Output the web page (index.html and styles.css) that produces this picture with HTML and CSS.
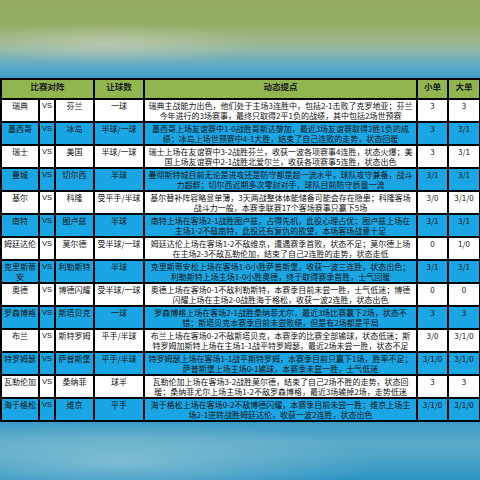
FILE: index.html
```html
<!DOCTYPE html>
<html lang="zh">
<head>
<meta charset="utf-8">
<link rel="stylesheet" href="styles.css">
</head>
<body>
<div class="page">
  <div class="sky"></div>
  <table class="grid">
    <colgroup>
      <col class="c-team"><col class="c-vs"><col class="c-team2"><col class="c-hc"><col class="c-desc"><col class="c-num"><col class="c-num2">
    </colgroup>
    <thead>
      <tr class="head">
        <th colspan="3">比赛对阵</th><th>让球数</th><th>动态提点</th><th>小单</th><th>大单</th>
      </tr>
    </thead>
    <tbody>
      <tr class="w"><td>瑞典</td><td class="vs">VS</td><td>芬兰</td><td>一球</td><td class="desc">瑞典主战能力出色，他们处于主场3连胜中，包括2-1击败了克罗地亚；芬兰<br>今年进行的3场赛事，最终只取得2平1负的战绩，其中包括2场世预赛</td><td>3</td><td>3</td></tr>
      <tr class="b"><td>墨西哥</td><td class="vs">VS</td><td>冰岛</td><td>半球/一球</td><td class="desc">墨西哥上场友谊赛中1-0战胜哥斯达黎加，最近3场友谊赛取得2胜1负的成<br>绩；冰岛上场世预赛中4-1大胜，结束了自己连败的走势，状态回暖</td><td>3</td><td>3/1</td></tr>
      <tr class="w"><td>瑞士</td><td class="vs">VS</td><td>美国</td><td>半球/一球</td><td class="desc">瑞士上场在友谊赛中3-2战胜芬兰，收获一波各项赛事4连胜，状态火爆；美<br>国上场友谊赛中2-1战胜北爱尔兰，收获各项赛事5连胜，状态出色</td><td>3</td><td>3/1</td></tr>
      <tr class="b"><td>曼城</td><td class="vs">VS</td><td>切尔西</td><td>半球</td><td class="desc">曼彻斯特城目前无论是进攻还是防守都是超一流水平，球队攻守兼备，战斗<br>力超群；切尔西近期多次零封对手，球队目前防守质量一流</td><td>3/1</td><td>3/1</td></tr>
      <tr class="w"><td>基尔</td><td class="vs">VS</td><td>科隆</td><td>受平手/半球</td><td class="desc">基尔替补阵容略显单薄，3天两战整体体能储备可能会存在隐患；科隆客场<br>战斗力一般，本赛季联赛17个客场赛事只赢下5场</td><td>3/0</td><td>3/1/0</td></tr>
      <tr class="b"><td>南特</td><td class="vs">VS</td><td>图卢兹</td><td>半球</td><td class="desc">南特上场在客场2-1战胜图卢兹，占得先机，此役心理占优；图卢兹上场在<br>主场1-2不敌南特，此役还有复仇的欲望，本场客场战意十足</td><td>3/1</td><td>3/1</td></tr>
      <tr class="w"><td>姆廷达伦</td><td class="vs">VS</td><td>莫尔德</td><td>受半球/一球</td><td class="desc">姆廷达伦上场在客场1-2不敌维京，遭遇赛季首败，状态不足；莫尔德上场<br>在主场2-3不敌瓦勒伦加，结束了自己2连胜的走势，状态走低</td><td>0</td><td>1/0</td></tr>
      <tr class="b"><td>克里斯蒂安</td><td class="vs">VS</td><td>利勒斯特</td><td>半球</td><td class="desc">克里斯蒂安松上场在客场1-0小胜萨普斯堡，收获一波三连胜，状态出色；<br>利勒斯特上场主场1-0小胜奥德，终于取得赛季首胜，士气回暖</td><td>3/1</td><td>3/1</td></tr>
      <tr class="w"><td>奥德</td><td class="vs">VS</td><td>博德闪耀</td><td>受半球/一球</td><td class="desc">奥德上场在客场0-1不敌利勒斯特，本赛季目前未尝一胜，士气低迷；博德<br>闪耀上场在主场2-0战胜海于格松，收获一波2连胜，状态出色</td><td>0</td><td>0</td></tr>
      <tr class="b"><td>罗森博格</td><td class="vs">VS</td><td>斯塔贝克</td><td>一球</td><td class="desc">罗森博格上场在客场2-1战胜桑纳菲尤尔，最近3场比赛赢下2场，状态不<br>错；斯塔贝克本赛季目前未尝败绩，但是有2场都是平局</td><td>3</td><td>3</td></tr>
      <tr class="w"><td>布兰</td><td class="vs">VS</td><td>斯特罗姆</td><td>平手/半球</td><td class="desc">布兰上场在客场0-2不敌斯塔贝克，本赛季的比赛全部输球，状态低迷；斯<br>特罗姆加斯特上场在主场1-1战平特罗姆瑟，最近2场未尝一胜，状态不足</td><td>3/0</td><td>3/1/0</td></tr>
      <tr class="b"><td>特罗姆瑟</td><td class="vs">VS</td><td>萨普斯堡</td><td>平手/半球</td><td class="desc">特罗姆瑟上场在客场1-1战平斯特罗姆，本赛季目前只赢下1场，胜率不足；<br>萨普斯堡上场主场0-1输球，本赛季未尝一胜，士气低迷</td><td>3/1/0</td><td>3/1/0</td></tr>
      <tr class="w"><td>瓦勒伦加</td><td class="vs">VS</td><td>桑纳菲</td><td>球半</td><td class="desc">瓦勒伦加上场在客场3-2战胜莫尔德，结束了自己2场不胜的走势，状态回<br>暖；桑纳菲尤尔上场主场1-2不敌罗森博格，最近3场输掉2场，走势低迷</td><td>3</td><td>3</td></tr>
      <tr class="b"><td>海于格松</td><td class="vs">VS</td><td>维京</td><td>平手</td><td class="desc">海于格松上场在客场0-2不敌博德闪耀，本赛季目前未尝一胜；维京上场主<br>场2-1逆转战胜姆廷达伦，收获一波2连胜，状态出色</td><td>3/1/0</td><td>3/1/0</td></tr>
    </tbody>
  </table>
  <div class="sea"></div>
</div>
</body>
</html>
```

FILE: styles.css
```css
html, body {
  margin: 0;
  padding: 0;
}
body {
  width: 480px;
  height: 480px;
  overflow: hidden;
  font-family: "Noto Sans CJK SC", "Noto Sans", sans-serif;
}
.page {
  width: 480px;
  height: 480px;
  display: flex;
  flex-direction: column;
  background: #3a9cc8;
}
.sky {
  height: 78px;
  flex: none;
  background:
    radial-gradient(ellipse 150px 20px at 110px 44px, rgba(205, 212, 195, 0.55), rgba(205, 212, 195, 0) 100%),
    linear-gradient(to bottom, #93a95f 0%, #96ad66 30%, #9fb584 50%, #8fb7a8 65%, #5caacb 85%, #3e9dc8 100%);
}
.sea {
  flex: 1;
  background:
    radial-gradient(ellipse 260px 40px at 120px 40px, rgba(160, 205, 220, 0.6), rgba(160, 205, 220, 0) 100%),
    linear-gradient(to bottom, #3c9bc6 0%, #5aaac8 35%, #4ea4c6 60%, #2a93c3 100%);
}
.grid {
  flex: none;
  width: 479px;
  table-layout: fixed;
  border-collapse: collapse;
  font-size: 8px;
  line-height: 10px;
  color: #111;
}
.c-team { width: 38px; }
.c-vs { width: 16px; }
.c-team2 { width: 39px; }
.c-hc { width: 50px; }
.c-desc { width: 273px; }
.c-num { width: 31px; }
.c-num2 { width: 32px; }

.grid th, .grid td {
  border: 2px solid #000;
  padding: 1px 0 0;
  text-align: center;
  vertical-align: top;
  overflow: hidden;
}
.head th {
  height: 17px;
  background: #91b64f;
  font-weight: bold;
  font-size: 8.5px;
  color: #1b1b1b;
}
.grid tbody tr {
  height: 21.57px;
}
.grid td {
  height: 18.57px;
}
.w td { background: #ffffff; }
.b td { background: #1aa6e4; }
.vs {
  font-family: "Liberation Sans", sans-serif;
  font-size: 7.5px;
}
.desc {
  white-space: nowrap;
}
```
